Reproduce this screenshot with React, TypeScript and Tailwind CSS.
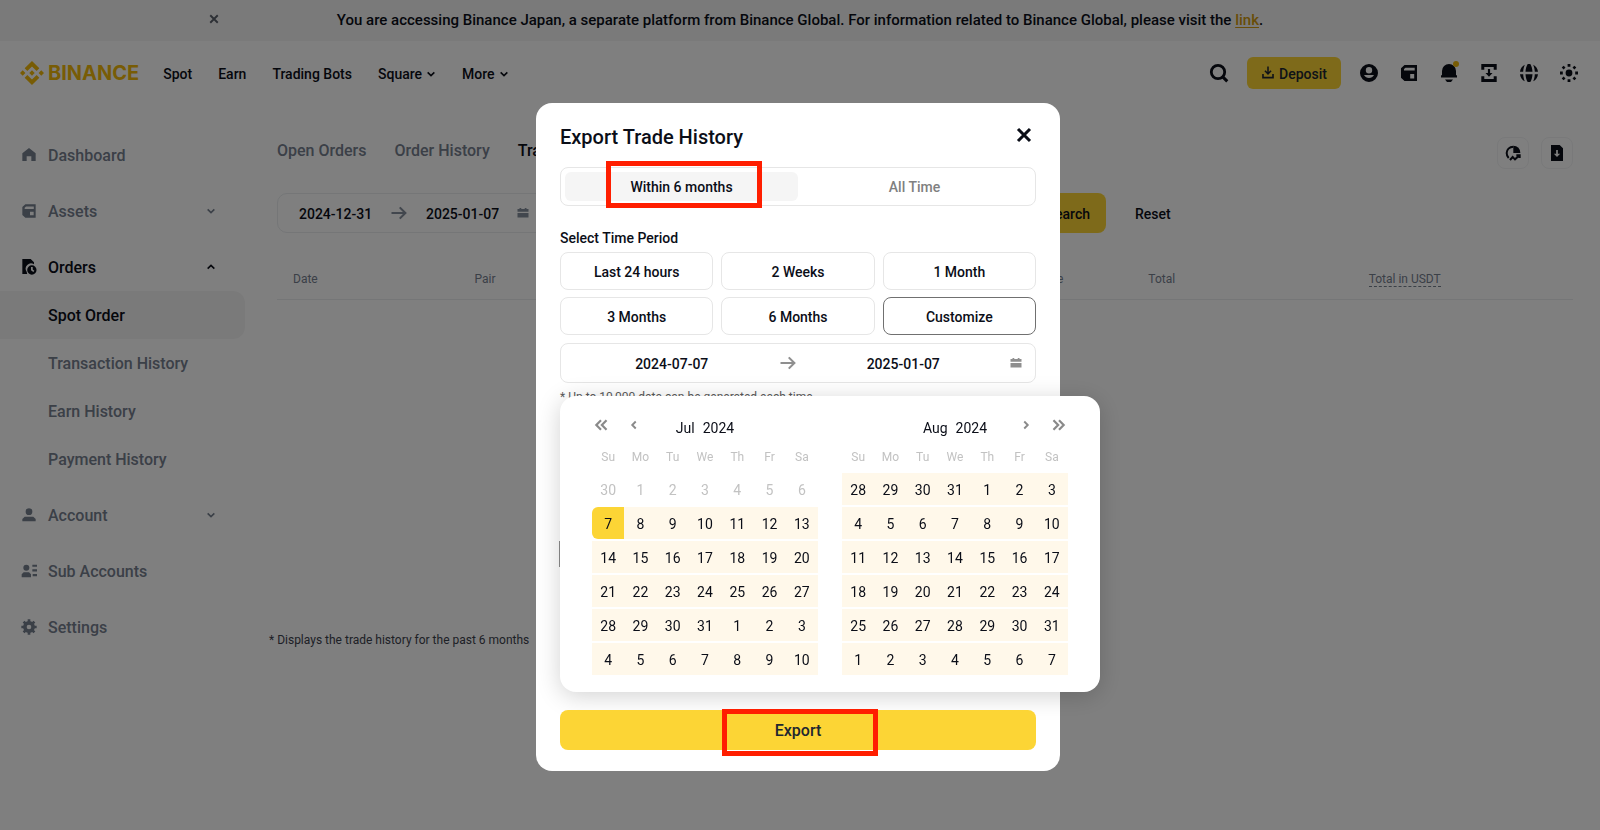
import type { ReactNode } from "react";

type IconProps = { className?: string; children: ReactNode };

function Icon({ className = "h-6 w-6", children }: IconProps) {
  return (
    <svg viewBox="0 0 24 24" className={className} fill="currentColor" aria-hidden="true">
      {children}
    </svg>
  );
}

const stroke = {
  fill: "none",
  stroke: "currentColor",
  strokeWidth: 3.8,
} as const;

function Chevron({ dir, className }: { dir: "down" | "up" | "left" | "right"; className?: string }) {
  const paths = {
    down: "M4 8l8 8 8-8",
    up: "M4 16l8-8 8 8",
    left: "M15.500 5l-7 7 7 7",
    right: "M8.500 5l7 7-7 7",
  };
  return (
    <Icon className={className}>
      <path d={paths[dir]} {...stroke} />
    </Icon>
  );
}

function DoubleChevron({ dir }: { dir: "left" | "right" }) {
  return (
    <Icon className="h-[14px] w-[14px]">
      <path
        d={dir === "left" ? "M12 4l-8 8 8 8M21.500 4l-8 8 8 8" : "M12 4l8 8-8 8M2.500 4l8 8-8 8"}
        {...stroke}
      />
    </Icon>
  );
}

function Cross({ className, width = 3 }: { className?: string; width?: number }) {
  return (
    <Icon className={className}>
      <path d="M3 3l18 18M21 3L3 21" {...stroke} strokeWidth={width} />
    </Icon>
  );
}

function ArrowRight() {
  return (
    <Icon className="h-[18px] w-[18px] shrink-0">
      <path d="M2 12h18M13 4.500l7.500 7.500-7.500 7.500" {...stroke} strokeWidth={2.8} />
    </Icon>
  );
}

function CalendarIcon() {
  return (
    <Icon className="h-3 w-3 shrink-0">
      <path d="M1 4h4V2h3.500v2h7V2H19v2h4v5.500H1zM1 12h22v9H1z" />
    </Icon>
  );
}

function WalletIcon({ className }: { className?: string }) {
  return (
    <Icon className={className}>
      <path
        fillRule="evenodd"
        d="M7.500 4H20v16H7.500L4 16.800V7.200zM8.500 6.700L7 8v1.500h10.700V6.700zM13.200 13v4.500h4V13z"
      />
    </Icon>
  );
}

function BinanceMark() {
  return (
    <Icon className="h-6 w-6">
      <path d="M16.624 13.9202l2.7175 2.7154-7.353 7.353-7.353-7.352 2.7175-2.7164 4.6355 4.6595 4.6356-4.6595zm4.6366-4.6366L24 12l-2.7154 2.7164L18.5682 12l2.6924-2.7164zm-9.272.001l2.7163 2.6914-2.7164 2.7174v-.001L9.2721 12l2.7164-2.7154zm-9.2722-.001L5.4088 12l-2.6914 2.6924L0 12l2.7164-2.7164zM11.9885.0115l7.353 7.329-2.7174 2.7154-4.6356-4.6356-4.6355 4.6595-2.7174-2.7154 7.353-7.353z" />
    </Icon>
  );
}

function Banner() {
  return (
    <div className="relative flex h-[41px] items-center justify-center bg-[#f5f5f5] text-[15px] font-medium">
      <button type="button" aria-label="Dismiss notice" className="absolute left-[209px] top-[14px] text-[#5a606b]">
        <Cross className="h-[10px] w-[10px]" width={4.6} />
      </button>
      <p>
        You are accessing Binance Japan, a separate platform from Binance Global. For information related to
        Binance Global, please visit the{" "}
        <a href="#global" className="text-[#d09a10] underline underline-offset-2">
          link
        </a>
        .
      </p>
    </div>
  );
}

const navItems = [
  { label: "Spot", menu: false },
  { label: "Earn", menu: false },
  { label: "Trading Bots", menu: false },
  { label: "Square", menu: true },
  { label: "More", menu: true },
];

function Header() {
  return (
    <header className="flex h-16 items-center pl-5 pr-[19px]">
      <a href="#home" className="flex items-center gap-1 text-[#f0b90b]">
        <BinanceMark />
        <span className="font-['Inter',sans-serif] text-[20px] font-bold leading-6">BINANCE</span>
      </a>
      <nav className="ml-6 flex items-center gap-[26px] pt-0.5 text-sm font-medium">
        {navItems.map((item) => (
          <a key={item.label} href={`#${item.label}`} className="flex items-center gap-1">
            {item.label}
            {item.menu && <Chevron dir="down" className="h-[10px] w-[10px]" />}
          </a>
        ))}
      </nav>
      <div className="ml-auto flex items-center gap-4">
        <button type="button" aria-label="Search">
          <Icon>
            <circle cx="11" cy="11" r="6.700" {...stroke} strokeWidth={2.8} />
            <path d="M16.300 14.300l5 5-2.100 2.100-5-5z" />
          </Icon>
        </button>
        <button
          type="button"
          className="flex h-8 items-center gap-1 rounded-md bg-[#fcd535] px-[14px] text-sm font-medium text-[#202630]"
        >
          <Icon className="h-[14px] w-[14px] shrink-0">
            <path d="M10.700 1h2.600v9.200l3-3 1.900 1.900L12 15.300 5.800 9.100l1.900-1.900 3 3zM2 13.500h2.800v5h14.400v-5H22v7.800H2z" />
          </Icon>
          <span className="pt-0.5">Deposit</span>
        </button>
        <button type="button" aria-label="Profile">
          <Icon>
            <path
              fillRule="evenodd"
              d="M12 3a9 9 0 100 18 9 9 0 000-18zm0 3a3.200 3.200 0 110 6.400A3.200 3.200 0 0112 6zm-5 8h10a5.700 5.700 0 01-10 0z"
            />
          </Icon>
        </button>
        <button type="button" aria-label="Wallet">
          <WalletIcon className="h-6 w-6" />
        </button>
        <button type="button" aria-label="Notifications" className="relative">
          <Icon>
            <path d="M12 3a7 7 0 017 7v4.200h1v2.300H4v-2.300h1V10a7 7 0 017-7zM8 18.500h8L14 21h-4z" />
          </Icon>
          <span className="absolute right-0.5 top-0 h-[6px] w-[6px] rounded-full bg-[#f0b90b]" />
        </button>
        <button type="button" aria-label="Downloads">
          <Icon>
            <path d="M4.300 3h15.400v5.800h-3V6H7.300v2.800h-3zM4.300 21h15.400v-5.800h-3V18H7.300v-2.800h-3zM10.900 8h2.200v4h2.400L12 15.800 8.500 12h2.400z" />
          </Icon>
        </button>
        <button type="button" aria-label="Language">
          <Icon>
            <path d="M10.700 3h2.600c1.300 2 2 4.800 2.200 7.800h-7C8.700 7.800 9.400 5 10.700 3zM8.500 13.200h7c-.2 3-.9 5.800-2.200 7.800h-2.600c-1.300-2-2-4.800-2.200-7.800zM7.800 3.700C6.900 5.800 6.300 8.200 6.200 10.800H3C3.300 7.600 5.200 5 7.800 3.700zM16.200 3.700c.9 2.100 1.500 4.500 1.600 7.100H21c-.3-3.200-2.200-5.800-4.800-7.100zM3 13.200h3.200c.1 2.600.7 5 1.600 7.100-2.600-1.300-4.500-3.900-4.800-7.100zM21 13.200h-3.200c-.1 2.600-.7 5-1.600 7.100 2.600-1.300 4.500-3.900 4.800-7.100z" />
          </Icon>
        </button>
        <button type="button" aria-label="Theme">
          <Icon>
            <circle cx="12" cy="12" r="3.400" />
            <path d="M10.600 3h2.800v2.800h-2.800zM10.600 18.200h2.800V21h-2.800zM3 10.600h2.800v2.800H3zM18.200 10.600H21v2.800h-2.800zM6.600 4.700l1.900 1.900-1.900 1.900-1.900-1.900zM17.400 4.700l1.900 1.900-1.900 1.900-1.900-1.900zM6.600 15.500l1.900 1.900-1.900 1.900-1.900-1.900zM17.400 15.500l1.900 1.900-1.900 1.900-1.900-1.900z" />
          </Icon>
        </button>
      </div>
    </header>
  );
}

const sideIcon = "h-4 w-4 shrink-0";

type SideItemProps = {
  label: string;
  icon: ReactNode;
  chevron?: "down" | "up";
  active?: boolean;
};

function SideItem({ label, icon, chevron, active = false }: SideItemProps) {
  return (
    <a
      href={`#${label}`}
      className={`flex h-12 items-center gap-[11px] pl-[21px] pr-[29px] ${active ? "text-[#0b0e18]" : "text-[#76808f]"}`}
    >
      {icon}
      <span className="pt-0.5">{label}</span>
      {chevron && <Chevron dir={chevron} className="ml-auto h-[10px] w-[10px]" />}
    </a>
  );
}

const orderLinks = ["Spot Order", "Transaction History", "Earn History", "Payment History"];

function Sidebar() {
  return (
    <nav className="flex w-[245px] shrink-0 flex-col gap-2 pt-[26px] font-medium">
      <SideItem
        label="Dashboard"
        icon={
          <Icon className={sideIcon}>
            <path d="M12 1.500l10 8V21h-6.500v-7h-7v7H2V9.500z" />
          </Icon>
        }
      />
      <SideItem
        label="Assets"
        chevron="down"
        icon={
          <Icon className={sideIcon}>
            <path
              fillRule="evenodd"
              d="M6.500 2H22v20H6.500L2 18V6zM7.500 5.200L5.500 7v2h13.700V5.200zM13.500 13v5.500H19V13z"
            />
          </Icon>
        }
      />
      <div>
        <SideItem
          label="Orders"
          chevron="up"
          active
          icon={
            <Icon className={sideIcon}>
              <path d="M2 0h12.500l5 5v2.800A8 8 0 008.500 19l.8 3.500H2z" />
              <path
                fillRule="evenodd"
                d="M16.300 9.500a7 7 0 100 14 7 7 0 000-14zm-1.300 2.600h2.600v3.700l2.400 1.800-1.500 2-3.500-2.600z"
              />
            </Icon>
          }
        />
        {orderLinks.map((label, i) => (
          <a
            key={label}
            href={`#${label}`}
            className={`flex h-12 items-center pl-12 pt-0.5 ${
              i === 0 ? "rounded-r-xl bg-[#f5f5f5] text-[#0b0e18]" : "text-[#76808f]"
            }`}
          >
            {label}
          </a>
        ))}
      </div>
      <SideItem
        label="Account"
        chevron="down"
        icon={
          <Icon className={sideIcon}>
            <circle cx="12" cy="7" r="5" />
            <path d="M5.500 14.500h13L22 18v3.500H2V18z" />
          </Icon>
        }
      />
      <SideItem
        label="Sub Accounts"
        icon={
          <Icon className={sideIcon}>
            <circle cx="8" cy="7" r="4.500" />
            <path d="M4 14h8l3 3v4.500H1V17zM17 2.500h7v3.200h-7zM17 9.500h7v3.200h-7zM17.500 16.500H24v3.200h-6.500z" />
          </Icon>
        }
      />
      <SideItem
        label="Settings"
        icon={
          <Icon className={sideIcon}>
            <circle cx="12" cy="12" r="6.200" fill="none" stroke="currentColor" strokeWidth={5.4} />
            <path d="M10 .5h4v4h-4zM10 19.500h4v4h-4zM.5 10h4v4h-4zM19.500 10h4v4h-4zM5.300 2.500l2.800 2.800-2.800 2.800-2.800-2.800zM18.700 2.500l2.800 2.800-2.800 2.800-2.800-2.800zM5.300 15.900l2.800 2.800-2.800 2.800-2.800-2.800zM18.700 15.900l2.800 2.800-2.800 2.800-2.800-2.800z" />
          </Icon>
        }
      />
    </nav>
  );
}

function Orders() {
  return (
    <main className="min-w-0 flex-1 pl-8 pr-[27px] pt-8">
      <div className="flex items-center">
        <div className="flex gap-7 pb-1 font-medium text-[#76808f]">
          <a href="#open">Open Orders</a>
          <a href="#history">Order History</a>
          <a href="#trades" className="text-[#0b0e18]">
            Trade History
          </a>
        </div>
        <div className="ml-auto flex gap-3">
          <button
            type="button"
            aria-label="Analysis"
            className="flex h-8 w-8 items-center justify-center rounded-lg border border-[#f2f3f5]"
          >
            <Icon className="h-4 w-4">
              <path d="M12.500 1A10.500 10.500 0 0123 12H12.500z" />
              <path d="M12.500 2.500C6.500 2.500 2.500 7 2.500 12c0 3 1 5.500 3 7.500" {...stroke} strokeWidth={3} />
              <path d="M7.500 22.500l4-4.500 3.500 3.500 5.500-5M17 15.500h5v4" {...stroke} strokeWidth={3} />
            </Icon>
          </button>
          <button
            type="button"
            aria-label="Export"
            className="flex h-8 w-8 items-center justify-center rounded-lg border border-[#f2f3f5]"
          >
            <Icon className="h-4 w-4">
              <path
                fillRule="evenodd"
                d="M3 0h13l5 5v19H3zM10.700 7.500v5.500H7.200l4.800 5 4.800-5h-3.500V7.500z"
              />
            </Icon>
          </button>
        </div>
      </div>
      <div className="mt-6 flex items-center text-sm font-medium">
        <div className="flex w-[829px] justify-between">
          <div className="flex h-10 w-[272px] items-center gap-[18px] rounded-[10px] border border-[#eaecef] pl-[21px] pr-4 text-[#848e9c]">
            <input aria-label="From" readOnly value="2024-12-31" className="w-[73px] pt-0.5 text-[#0b0e18]" />
            <ArrowRight />
            <input aria-label="To" readOnly value="2025-01-07" className="w-[73px] pt-0.5 text-[#0b0e18]" />
            <CalendarIcon />
          </div>
          <button type="button" className="h-10 rounded-lg bg-[#fcd535] px-4 pt-0.5">
            Search
          </button>
        </div>
        <button type="button" className="ml-[29px] pt-0.5">
          Reset
        </button>
      </div>
      <table className="mt-[26px] w-full table-fixed text-left text-xs text-[#76808f]">
        <colgroup>
          <col className="w-[14%]" />
          <col className="w-[43%]" />
          <col className="w-[9%]" />
          <col className="w-[17%]" />
          <col className="w-[17%]" />
        </colgroup>
        <thead>
          <tr className="h-10 border-b border-[#eaecef]">
            <th className="pl-4 font-normal">Date</th>
            <th className="pl-4 font-normal">Pair</th>
            <th className="pl-6 font-normal">Role</th>
            <th className="pl-4 font-normal">Total</th>
            <th className="pl-4 font-normal">
              <span className="border-b border-dashed border-[#76808f]">Total in USDT</span>
            </th>
          </tr>
        </thead>
      </table>
      <p className="-ml-2 mt-[332px] text-xs text-[#3c424d]">* Displays the trade history for the past 6 months</p>
    </main>
  );
}

const weekdays = ["Su", "Mo", "Tu", "We", "Th", "Fr", "Sa"];

function buildWeeks(before: number[], monthLength: number) {
  const days = [...before, ...Array.from({ length: monthLength }, (_, i) => i + 1)];
  const rest = 42 - days.length;
  for (let d = 1; d <= rest; d++) days.push(d);
  return Array.from({ length: 6 }, (_, w) => days.slice(w * 7, w * 7 + 7));
}

type MonthProps = {
  month: string;
  weeks: number[][];
  start?: number;
  left?: ReactNode;
  right?: ReactNode;
};

function Month({ month, weeks, start, left, right }: MonthProps) {
  return (
    <div className="flex-1">
      <div className="grid h-7 grid-cols-[1fr_auto_1fr] items-center text-sm">
        <div className="flex h-full items-start gap-5 pl-0.5 text-[#8a8a8a]">{left}</div>
        <div className="flex gap-2 pt-0.5">
          <span>{month}</span>
          <span>2024</span>
        </div>
        <div className="flex h-full items-start justify-end gap-5 pr-0.5 text-[#8a8a8a]">{right}</div>
      </div>
      <table className="w-full table-fixed border-separate border-spacing-x-0 border-spacing-y-0.5 text-center">
        <thead>
          <tr className="h-7 text-xs text-[#c2c2c2]">
            {weekdays.map((day) => (
              <th key={day} className="p-0 font-normal">
                {day}
              </th>
            ))}
          </tr>
        </thead>
        <tbody>
          {weeks.map((week, w) => (
            <tr key={w} className="h-8">
              {week.map((day, d) => {
                const index = w * 7 + d;
                const disabled = start !== undefined && index < start;
                const selected = index === start;
                return (
                  <td
                    key={d}
                    className={`p-0 ${
                      disabled ? "text-[#c2c2c2]" : selected ? "rounded-l-md bg-[#fcd535]" : "bg-[#fff8ea]"
                    }`}
                  >
                    <button type="button" disabled={disabled} className="block h-8 w-full pt-0.5 text-sm">
                      {day}
                    </button>
                  </td>
                );
              })}
            </tr>
          ))}
        </tbody>
      </table>
    </div>
  );
}

function RangeCalendar() {
  return (
    <div className="absolute -left-px top-[52px] w-[540px] rounded-2xl bg-white px-8 pb-[15px] pt-[17px] font-normal shadow-[0_4px_24px_rgba(0,0,0,0.18)]">
      <span className="absolute -left-px top-[145px] h-[26px] w-px bg-[#808080]" />
      <div className="flex gap-6">
        <Month
          month="Jul"
          weeks={buildWeeks([30], 31)}
          start={7}
          left={
            <>
              <button type="button" aria-label="Previous year" className="mt-[5px]">
                <DoubleChevron dir="left" />
              </button>
              <button type="button" aria-label="Previous month" className="mt-[6px]">
                <Chevron dir="left" className="h-3 w-3" />
              </button>
            </>
          }
        />
        <Month
          month="Aug"
          weeks={buildWeeks([28, 29, 30, 31], 31)}
          right={
            <>
              <button type="button" aria-label="Next month" className="mt-[6px]">
                <Chevron dir="right" className="h-3 w-3" />
              </button>
              <button type="button" aria-label="Next year" className="mt-[5px]">
                <DoubleChevron dir="right" />
              </button>
            </>
          }
        />
      </div>
    </div>
  );
}

const periods = ["Last 24 hours", "2 Weeks", "1 Month", "3 Months", "6 Months", "Customize"];

function ExportDialog() {
  return (
    <div className="fixed inset-0 flex items-start justify-center bg-black/50 pr-1 pt-[103px]">
      <div
        role="dialog"
        aria-labelledby="export-title"
        className="w-[524px] rounded-2xl bg-white px-6 pb-[21px] pt-5 text-sm font-medium"
      >
        <div className="flex items-start justify-between pr-1">
          <h2 id="export-title" className="text-xl leading-7">
            Export Trade History
          </h2>
          <button type="button" aria-label="Close" className="mt-1">
            <Cross className="h-4 w-4" width={4.6} />
          </button>
        </div>
        <div className="mt-4 grid h-[39px] grid-cols-2 rounded-lg border border-[#e6e6e6] p-1">
          <button type="button" className="relative rounded-md bg-[#f5f5f5]">
            Within 6 months
            <span className="absolute -top-[11px] left-[41px] h-[47px] w-[156px] border-[5px] border-[#ff1e00]" />
          </button>
          <button type="button" className="text-[#808080]">
            All Time
          </button>
        </div>
        <p className="mt-[22px] leading-5">Select Time Period</p>
        <div className="mt-1 grid grid-cols-3 gap-x-2 gap-y-[7px]">
          {periods.map((period) => (
            <button
              key={period}
              type="button"
              className={`h-[38px] rounded-lg border pt-0.5 ${
                period === "Customize" ? "border-[#707070]" : "border-[#e6e6e6]"
              }`}
            >
              {period}
            </button>
          ))}
        </div>
        <div className="relative mt-2 flex h-10 items-center rounded-lg border border-[#e6e6e6] pr-[13px] text-[#8f8f8f]">
          <input
            aria-label="Start date"
            defaultValue="2024-07-07"
            className="min-w-0 flex-1 pl-1 pt-0.5 text-center text-[#0b0e18]"
          />
          <ArrowRight />
          <input
            aria-label="End date"
            defaultValue="2025-01-07"
            className="min-w-0 flex-1 pt-0.5 text-center text-[#0b0e18]"
          />
          <CalendarIcon />
          <div className="text-[#0b0e18]">
            <RangeCalendar />
          </div>
        </div>
        <p className="mt-[6px] text-xs font-normal text-[#5a5a5a]">* Up to 10,000 data can be generated each time.</p>
        <button
          type="button"
          className="relative mt-[305px] h-10 w-full rounded-lg bg-[#fcd535] pt-0.5 text-base text-[#202630]"
        >
          Export
          <span className="absolute -top-px left-[162px] h-[47px] w-[156px] border-[5px] border-[#ff1e00]" />
        </button>
      </div>
    </div>
  );
}

export default function App() {
  return (
    <div className="min-h-screen bg-white font-['Roboto',sans-serif] text-base text-[#0b0e18]">
      <Banner />
      <Header />
      <div className="flex">
        <Sidebar />
        <Orders />
      </div>
      <ExportDialog />
    </div>
  );
}
